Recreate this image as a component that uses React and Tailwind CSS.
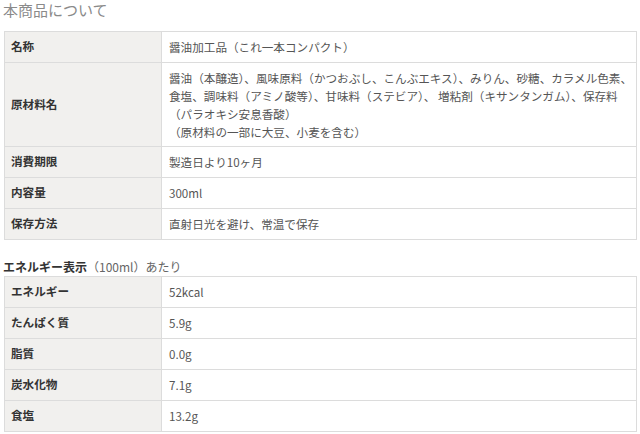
import React from "react";

const productRows = [
  { label: "名称", lines: ["醤油加工品（これ一本コンパクト）"] },
  {
    label: "原材料名",
    lines: [
      "醤油（本醸造）、風味原料（かつおぶし、こんぶエキス）、みりん、砂糖、カラメル色素、",
      "食塩、調味料（アミノ酸等）、甘味料（ステビア）、 増粘剤（キサンタンガム）、保存料",
      "（パラオキシ安息香酸）",
      "（原材料の一部に大豆、小麦を含む）",
    ],
  },
  { label: "消費期限", lines: ["製造日より10ヶ月"] },
  { label: "内容量", lines: ["300ml"] },
  { label: "保存方法", lines: ["直射日光を避け、常温で保存"] },
];

const energyRows = [
  { label: "エネルギー", lines: ["52kcal"] },
  { label: "たんぱく質", lines: ["5.9g"] },
  { label: "脂質", lines: ["0.0g"] },
  { label: "炭水化物", lines: ["7.1g"] },
  { label: "食塩", lines: ["13.2g"] },
];

const Row = ({ row, first }) => {
  const multi = row.lines.length > 1;
  return (
    <div
      className={`grid grid-cols-[157px_1fr] ${first ? "" : "border-t border-[#dcdcdc]"}`}
    >
      <div className="bg-[#f1f0ee] border-r border-[#dcdcdc] flex items-center pl-[6px] font-bold text-[#333] text-[11.6px]">
        {row.label}
      </div>
      <div
        className={`flex flex-col justify-center pl-[7px] text-[#555] text-[11.6px] ${
          multi ? "py-[5px] h-[83px]" : "h-[30px]"
        }`}
      >
        {row.lines.map((l, i) => (
          <div key={i} className="whitespace-nowrap leading-[18px]">
            {l}
          </div>
        ))}
      </div>
    </div>
  );
};

const Table = ({ rows }) => (
  <div className="ml-[4px] mr-[3px] border border-[#dcdcdc]">
    {rows.map((r, i) => (
      <Row key={r.label} row={r} first={i === 0} />
    ))}
  </div>
);

export default function App() {
  return (
    <div
      className="w-[640px] h-[434px] overflow-hidden bg-white"
      style={{ fontFamily: '"Noto Sans CJK JP", "Noto Sans", sans-serif' }}
    >
      <h2 className="pl-[3px] pt-[1px] text-[15px] leading-[18px] text-[#8a8a8a] mb-[12px]">
        本商品について
      </h2>
      <Table rows={productRows} />
      <div className="pl-[3px] mt-[19px] mb-[1px] text-[12px] leading-[16px]">
        <span className="font-bold text-[#333]">エネルギー表示</span>
        <span className="text-[#666]">（100ml）あたり</span>
      </div>
      <Table rows={energyRows} />
    </div>
  );
}
